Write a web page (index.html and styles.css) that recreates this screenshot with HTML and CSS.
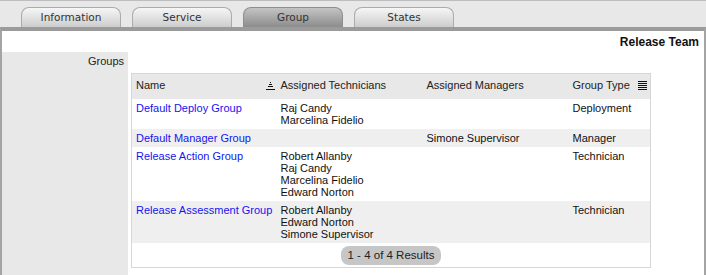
FILE: index.html
```html
<!DOCTYPE html>
<html lang="en">
<head>
    <meta charset="UTF-8">
    <title>Release Team - Group</title>
    <link rel="stylesheet" href="styles.css">
</head>
<body>
    <!-- Tab strip -->
    <div class="tabbar">
        <div class="tab">Information</div>
        <div class="tab">Service</div>
        <div class="tab active">Group</div>
        <div class="tab">States</div>
    </div>

    <div class="panel">
        <div class="panel-title">Release Team</div>

        <div class="field-row">
            <div class="field-label">Groups</div>
            <div class="field-value">
                <table class="group-table">
                    <colgroup>
                        <col class="col-name">
                        <col class="col-tech">
                        <col class="col-mgr">
                        <col>
                    </colgroup>
                    <thead>
                        <tr>
                            <th>Name
                                <svg class="sort-icon" width="9" height="9" viewBox="0 0 9 9">
                                    <path d="M4 1.5h1M3 3.5h3M2 5.5h5M0 8.5h9" stroke="#111" stroke-width="1"/>
                                </svg>
                            </th>
                            <th>Assigned Technicians</th>
                            <th>Assigned Managers</th>
                            <th>Group Type
                                <svg class="col-icon" width="9" height="10" viewBox="0 0 9 10">
                                    <path d="M0 1.5h9M0 3.5h9M0 5.5h9M0 7.5h9M0 9.5h9" stroke="#111" stroke-width="1"/>
                                </svg>
                            </th>
                        </tr>
                    </thead>
                    <tbody>
                        <tr>
                            <td><a href="#">Default Deploy Group</a></td>
                            <td>Raj Candy<br>Marcelina Fidelio</td>
                            <td></td>
                            <td>Deployment</td>
                        </tr>
                        <tr class="alt">
                            <td><a href="#">Default Manager Group</a></td>
                            <td></td>
                            <td>Simone Supervisor</td>
                            <td>Manager</td>
                        </tr>
                        <tr>
                            <td><a href="#">Release Action Group</a></td>
                            <td>Robert Allanby<br>Raj Candy<br>Marcelina Fidelio<br>Edward Norton</td>
                            <td></td>
                            <td>Technician</td>
                        </tr>
                        <tr class="alt">
                            <td><a href="#">Release Assessment Group</a></td>
                            <td>Robert Allanby<br>Edward Norton<br>Simone Supervisor</td>
                            <td></td>
                            <td>Technician</td>
                        </tr>
                    </tbody>
                    <tfoot>
                        <tr>
                            <td colspan="4"><span class="pager">1 - 4 of 4 Results</span></td>
                        </tr>
                    </tfoot>
                </table>
            </div>
        </div>
    </div>
</body>
</html>
```

FILE: styles.css
```css
body {
    margin: 0;
    height: 275px;
    overflow: hidden;
    font-family: "Liberation Sans", Arial, sans-serif;
    font-size: 11px;
    color: #111;
    background-color: #fff;
}

/* Tabs */
.tabbar {
    display: flex;
    gap: 11px;
    height: 26px;
    padding-left: 21px;
    background-color: #e8e8e8;
    border-top: 1px solid #bdbdbd;
    align-items: flex-end;
}

.tab {
    box-sizing: border-box;
    width: 100px;
    height: 20px;
    line-height: 19px;
    text-align: center;
    font-family: "DejaVu Sans", sans-serif;
    font-size: 10.5px;
    color: #333;
    border: 1px solid #ababab;
    border-bottom: none;
    border-radius: 8px 8px 0 0;
    background: linear-gradient(#f6f6f6, #cdcdcd);
}

.tab.active {
    background: linear-gradient(#c4c4c4, #8c8c8c);
    border-color: #8e8e8e;
}

/* Panel */
.panel {
    display: flex;
    flex-direction: column;
    box-sizing: border-box;
    height: 248px;
    border-top: 4px solid #9b9b9b;
    border-left: 2px solid #a4a4a4;
    border-right: 2px solid #a4a4a4;
}

.panel-title {
    text-align: right;
    font-size: 12px;
    font-weight: bold;
    line-height: 14px;
    padding: 4px 5px 3px 0;
}

.field-row {
    display: flex;
    flex: 1;
}

.field-label {
    width: 122px;
    flex-shrink: 0;
    background-color: #e8e8e8;
    text-align: right;
    padding: 3px 4px 0 0;
    line-height: 13px;
    color: #222;
}

.field-value {
    padding: 21px 0 0 3px;
}

/* Group table */
.group-table {
    width: 520px;
    table-layout: fixed;
    border-collapse: collapse;
    border: 1px solid #d6d6d6;
    line-height: 12px;
}

.col-name { width: 145px; }
.col-tech { width: 146px; }
.col-mgr { width: 146px; }

.group-table th {
    text-align: left;
    font-weight: normal;
    color: #222;
    background-color: #e8e8e8;
    padding: 5px 2px 8px 4px;
    height: 12px;
    white-space: nowrap;
}

.sort-icon,
.col-icon {
    float: right;
}

.sort-icon {
    margin-top: 2px;
}

.col-icon {
    margin-top: 1px;
    margin-right: 1px;
}

.group-table td {
    vertical-align: top;
    padding: 3px 4px;
    color: #111;
    white-space: nowrap;
}

.group-table tr.alt td {
    background-color: #efefef;
}

.group-table a {
    color: #1515f0;
    text-decoration: none;
}

.group-table tfoot td {
    text-align: center;
    padding: 3px 0 2px;
}

.pager {
    display: inline-block;
    height: 19px;
    line-height: 19px;
    padding: 0 7px;
    border-radius: 8px;
    background-color: #c6c6c6;
    color: #222;
    font-size: 11.5px;
}
```
